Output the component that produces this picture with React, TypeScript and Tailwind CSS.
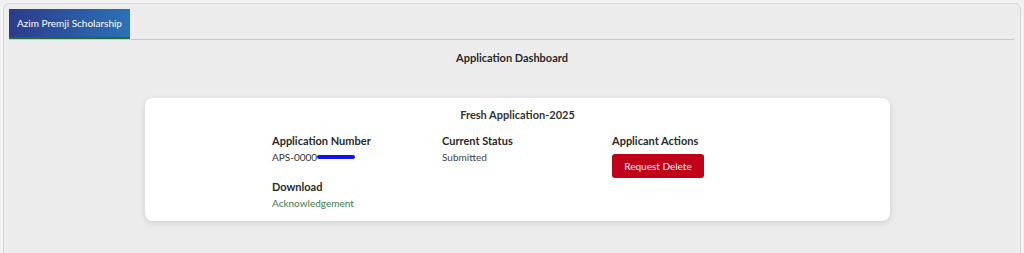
export default function App() {
  return (
    <div className="min-h-[253px] bg-[#f1f1f1] p-[3px] font-['Lato',sans-serif] text-[#222]">
      <div className="h-[260px] rounded-[6px] border border-[#d6d6d6] bg-[#ececec] px-[5px] pt-[5px]">
        {/* Tabs */}
        <div className="flex items-end border-b border-[#c9c9c9] mr-[1px]">
          <div className="flex h-[30px] w-[121px] items-center justify-center border-b-2 border-[#1f6b3a] bg-gradient-to-r from-[#2c3a8c] to-[#2a72b6] text-[10px] text-white">
            Azim Premji Scholarship
          </div>
        </div>

        <h2 className="mt-[10px] text-center text-[11px] font-bold leading-[16px] text-[#2a2a2a]">
          Application Dashboard
        </h2>

        {/* Card */}
        <div className="mt-[32px] ml-[136px] w-[745px] rounded-[8px] bg-white pt-[9px] pb-[10px] shadow-[0_2px_6px_rgba(0,0,0,0.12)]">
          <p className="text-center text-[11px] font-bold leading-[16px] text-[#333]">Fresh Application-2025</p>
          <div className="mt-[10px] grid grid-cols-[170px_170px_170px] pl-[127px]">
            <div>
              <p className="text-[11px] font-bold leading-[16px] text-[#2a2a2a]">Application Number</p>
              <p className="text-[10px] leading-[16px] text-[#333]">
                APS-0000
                <span className="inline-block h-[4px] w-[38px] translate-y-[-1px] rounded-full bg-[#1010f0] align-middle"></span>
              </p>
            </div>
            <div>
              <p className="text-[11px] font-bold leading-[16px] text-[#2a2a2a]">Current Status</p>
              <p className="text-[10px] leading-[16px] text-[#444]">Submitted</p>
            </div>
            <div>
              <p className="text-[11px] font-bold leading-[16px] text-[#2a2a2a]">Applicant Actions</p>
              <button className="mt-[5px] h-[24px] w-[92px] rounded-[3px] bg-[#c00018] text-[10px] text-white">
                Request Delete
              </button>
            </div>
            <div className="mt-[1px]">
              <p className="text-[11px] font-bold leading-[16px] text-[#2a2a2a]">Download</p>
              <p className="text-[10px] leading-[16px] text-[#3f7a47]">Acknowledgement</p>
            </div>
          </div>
        </div>
      </div>
    </div>
  )
}
